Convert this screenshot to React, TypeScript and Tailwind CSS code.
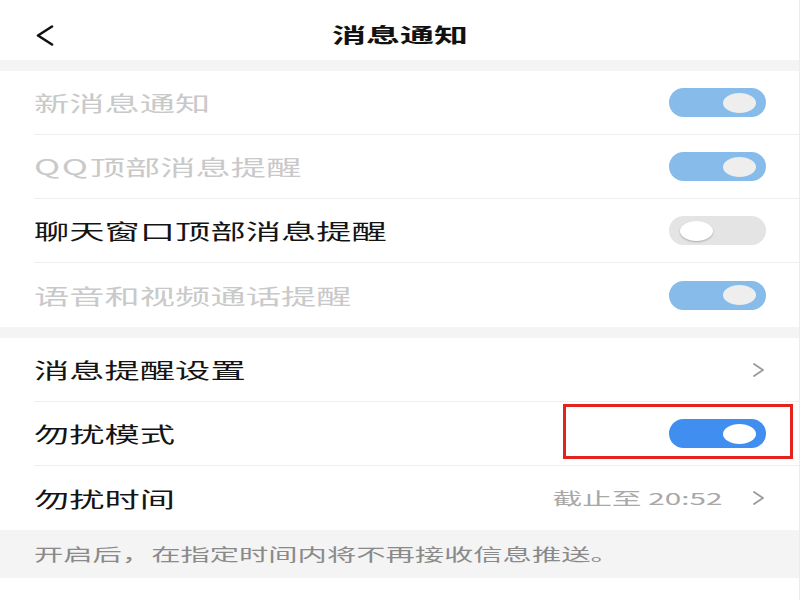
import React from 'react';

const FONT = { fontFamily: '"Noto Sans CJK SC", "Noto Sans", sans-serif' };

function Toggle({ state }: { state: 'on' | 'dim' | 'off' }) {
  const bg = state === 'on' ? 'bg-[#3f8ef0]' : state === 'dim' ? 'bg-[#86bbea]' : 'bg-[#e4e4e4]';
  const place = state === 'off' ? 'justify-start pl-[11px]' : 'justify-end pr-[10px]';
  const knob = state === 'off' ? 'bg-white shadow-[0_1px_2px_rgba(0,0,0,0.25)]' : state === 'on' ? 'bg-white' : 'bg-[#eeeeee]';
  return (
    <div className={`w-[97px] h-[29px] rounded-full flex items-center ${bg} ${place}`}>
      <div className={`w-[33px] h-[20px] rounded-[50%] ${knob}`}></div>
    </div>
  );
}

function Chevron() {
  return (
    <svg width="14" height="16" viewBox="0 0 14 16" className="block">
      <polyline points="2,2 11,8 2,14" fill="none" stroke="#9a9a9a" strokeWidth="1.8" strokeLinecap="round" strokeLinejoin="round" />
    </svg>
  );
}

function Label({ text, dim }: { text: string; dim?: boolean }) {
  return (
    <span className={`inline-block origin-left scale-x-[1.68] text-[21px] leading-none whitespace-nowrap ${dim ? 'text-[#c9c9c9]' : 'text-[#141414]'}`}>
      {text}
    </span>
  );
}

function Row({ children, right, last }: { children: React.ReactNode; right: React.ReactNode; last?: boolean }) {
  return (
    <div className="pl-[34px]">
      <div className={`h-[64px] flex items-center justify-between pr-[33px] ${last ? '' : 'border-b border-[#eeeeee]'}`}>
        {children}
        {right}
      </div>
    </div>
  );
}

export default function App() {
  return (
    <div className="w-[800px] h-[600px] bg-white overflow-hidden border-r border-[#ececec]" style={FONT}>
      {/* Header */}
      <div className="h-[60px] relative flex items-center justify-center">
        <div className="absolute left-[35px] top-[25px]">
          <svg width="20" height="21" viewBox="0 0 20 21">
            <polyline points="17,1.5 3,10.5 17,19.5" fill="none" stroke="#111" strokeWidth="2.6" strokeLinecap="round" strokeLinejoin="round" />
          </svg>
        </div>
        <span className="inline-block scale-x-[1.7] text-[20px] font-bold text-[#111] leading-none mt-[10px]">消息通知</span>
      </div>

      <div className="h-[11px] bg-[#f4f4f4]"></div>

      {/* Group 1 */}
      <Row right={<Toggle state="dim" />}>
        <Label text="新消息通知" dim />
      </Row>
      <Row right={<Toggle state="dim" />}>
        <span className="inline-block origin-left scale-x-[1.68] text-[21px] leading-none whitespace-nowrap text-[#c9c9c9]">
          <span className="tracking-[1px]">QQ</span>顶部消息提醒
        </span>
      </Row>
      <Row right={<Toggle state="off" />}>
        <Label text="聊天窗口顶部消息提醒" />
      </Row>
      <Row right={<Toggle state="dim" />} last>
        <Label text="语音和视频通话提醒" dim />
      </Row>

      <div className="h-[11px] bg-[#f4f4f4]"></div>

      {/* Group 2 */}
      <Row right={<Chevron />}>
        <Label text="消息提醒设置" />
      </Row>
      <div className="relative">
        <Row right={<Toggle state="on" />}>
          <Label text="勿扰模式" />
        </Row>
        <div className="absolute left-[563px] top-[2px] w-[230px] h-[55px] border-[3px] border-[#e5231d]"></div>
      </div>
      <Row
        right={
          <div className="flex items-center gap-[30px]">
            <span className="inline-block origin-right scale-x-[1.8] text-[16.5px] text-[#a8a8a8] leading-none whitespace-nowrap">截止至 20:52</span>
            <Chevron />
          </div>
        }
        last
      >
        <Label text="勿扰时间" />
      </Row>

      {/* Footer note */}
      <div className="h-[48px] bg-[#f4f4f4] pl-[34px] flex items-center">
        <span className="inline-block origin-left scale-x-[1.775] text-[16.5px] text-[#8a8a8a] leading-none whitespace-nowrap">开启后，在指定时间内将不再接收信息推送。</span>
      </div>
    </div>
  );
}
